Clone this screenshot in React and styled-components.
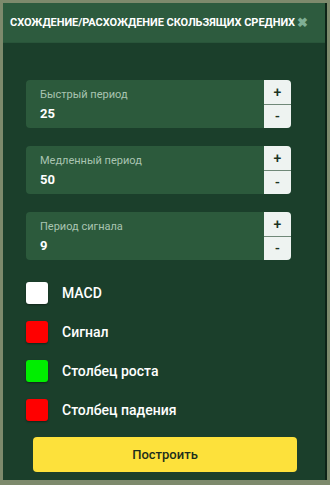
import React, { useState } from "react";
import styled, { createGlobalStyle } from "styled-components";

const GlobalStyle = createGlobalStyle`
  html, body {
    margin: 0;
    padding: 0;
    background: #7d8a6c;
  }
  body {
    font-family: Roboto, "Noto Sans", sans-serif;
  }
`;

const fields = [
  { label: "Быстрый период", value: 25 },
  { label: "Медленный период", value: 50 },
  { label: "Период сигнала", value: 9 },
];

const lines = [
  { label: "MACD", color: "#ffffff" },
  { label: "Сигнал", color: "#ff0000" },
  { label: "Столбец роста", color: "#00ee00" },
  { label: "Столбец падения", color: "#ff0000" },
];

const App = () => {
  const [values, setValues] = useState(fields.map((f) => f.value));

  const change = (index, step) => {
    const next = [...values];
    next[index] = Math.max(1, next[index] + step);
    setValues(next);
  };

  return (
    <Frame>
      <GlobalStyle />
      <Window>
        <Header>
          <Title>Схождение/расхождение скользящих средних</Title>
          <Close>✖</Close>
        </Header>
        <Body>
          <Fields>
            {fields.map((f, i) => (
              <Field key={f.label}>
                <FieldText>
                  <FieldLabel>{f.label}</FieldLabel>
                  <FieldValue>{values[i]}</FieldValue>
                </FieldText>
                <Stepper>
                  <StepButton onClick={() => change(i, 1)}>+</StepButton>
                  <StepButton $bottom onClick={() => change(i, -1)}>
                    -
                  </StepButton>
                </Stepper>
              </Field>
            ))}
          </Fields>
          <Lines>
            {lines.map((l) => (
              <LineRow key={l.label}>
                <Swatch $color={l.color} />
                <LineLabel>{l.label}</LineLabel>
              </LineRow>
            ))}
          </Lines>
          <BuildButton>Построить</BuildButton>
        </Body>
      </Window>
    </Frame>
  );
};

const Frame = styled.div`
  width: 330px;
  height: 485px;
  box-sizing: border-box;
  padding: 3px 3px 5px 3px;
  background: #7d8a6c;
`;

const Window = styled.div`
  height: 100%;
  display: flex;
  flex-direction: column;
  background: #1b3f2b;
  border-right: 2px solid #0e2417;
`;

const Header = styled.div`
  height: 39px;
  flex-shrink: 0;
  display: flex;
  align-items: center;
  padding: 0 0 0 7px;
  background: #2d5b3e;
  border-bottom: 1px solid #29553a;
`;

const Title = styled.div`
  color: #ffffff;
  font-size: 11px;
  font-weight: 700;
  text-transform: uppercase;
  letter-spacing: -0.05px;
  white-space: nowrap;
`;

const Close = styled.span`
  margin-left: 2px;
  color: #7fae95;
  font-size: 13px;
  font-weight: 700;
  line-height: 1;
`;

const Body = styled.div`
  flex: 1;
  display: flex;
  flex-direction: column;
  padding: 37px 0 0 23px;
`;

const Fields = styled.div`
  display: flex;
  flex-direction: column;
  gap: 18px;
  width: 265px;
`;

const Field = styled.div`
  height: 48px;
  display: flex;
  background: #2c5a3c;
  border-radius: 4px;
`;

const FieldText = styled.div`
  flex: 1;
  display: flex;
  flex-direction: column;
  padding: 8px 0 0 14px;
`;

const FieldLabel = styled.span`
  color: #a9c4b1;
  font-size: 11px;
`;

const FieldValue = styled.span`
  margin-top: 5px;
  color: #ffffff;
  font-size: 13px;
  font-weight: 700;
`;

const Stepper = styled.div`
  width: 27px;
  display: flex;
  flex-direction: column;
  border-radius: 0 4px 4px 0;
  overflow: hidden;
`;

const StepButton = styled.button`
  flex: 1;
  border: none;
  border-top: ${(p) => (p.$bottom ? "1px solid #6f8878" : "none")};
  padding: 0;
  margin: 0;
  background: #eef3f1;
  color: #1b3322;
  font-family: Roboto, sans-serif;
  font-size: 14px;
  font-weight: 500;
  cursor: pointer;
`;

const Lines = styled.div`
  display: flex;
  flex-direction: column;
  gap: 17px;
  margin-top: 22px;
`;

const LineRow = styled.div`
  display: flex;
  align-items: center;
  height: 22px;
`;

const Swatch = styled.div`
  width: 22px;
  height: 22px;
  border-radius: 3px;
  background: ${(p) => p.$color};
  box-shadow: 0 1px 2px rgba(0, 0, 0, 0.4);
`;

const LineLabel = styled.span`
  margin-left: 14px;
  color: #ffffff;
  font-size: 14px;
  font-weight: 500;
`;

const BuildButton = styled.button`
  margin: 16px 0 0 7px;
  width: 264px;
  height: 35px;
  border: none;
  border-radius: 4px;
  background: #fde13b;
  color: #1b2e1c;
  font-family: Roboto, sans-serif;
  font-size: 13px;
  font-weight: 500;
  cursor: pointer;
`;

export default App;
